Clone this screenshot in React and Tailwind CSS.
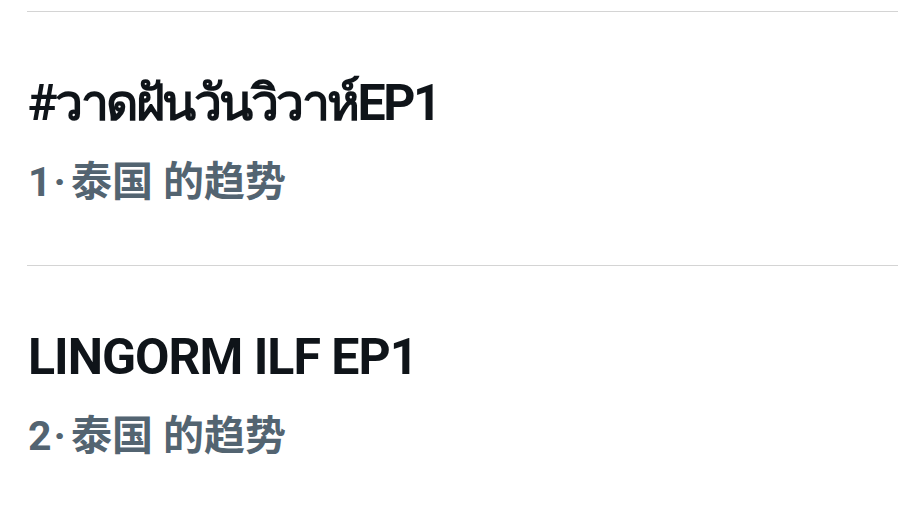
import React from "react";

const trends = [
	{ rank: 1, title: "#วาดฝันวันวิวาห์EP1", place: "泰国 的趋势", thai: true },
	{ rank: 2, title: "LINGORM ILF EP1", place: "泰国 的趋势", thai: false },
];

const App = () => {
	return (
		<div
			className="min-h-[505px] w-[898px] bg-white pt-[11px]"
			style={{ fontFamily: 'Roboto, "Noto Sans", "Noto Sans CJK SC", sans-serif' }}
		>
			{trends.map((trend) => (
				<div key={trend.rank} className="ml-[27px] border-t border-[#d4d4d4]">
					<div className="pl-px pt-[61px] pb-[59px]">
						<h2
							className={
								trend.thai
									? "text-[50px] leading-[60px] font-bold tracking-[-2.5px] text-[#0f1419]"
									: "text-[50px] leading-[60px] font-bold tracking-[-1px] text-[#0f1419]"
							}
						>
							{trend.title}
						</h2>
						<div className="mt-[25px] text-[41px] leading-[48px] font-bold text-[#536471]">
							<span>{trend.rank}</span>
							<span className="ml-[2px] mr-[5px]">·</span>
							<span>{trend.place}</span>
						</div>
					</div>
				</div>
			))}
		</div>
	);
};

export default App;
